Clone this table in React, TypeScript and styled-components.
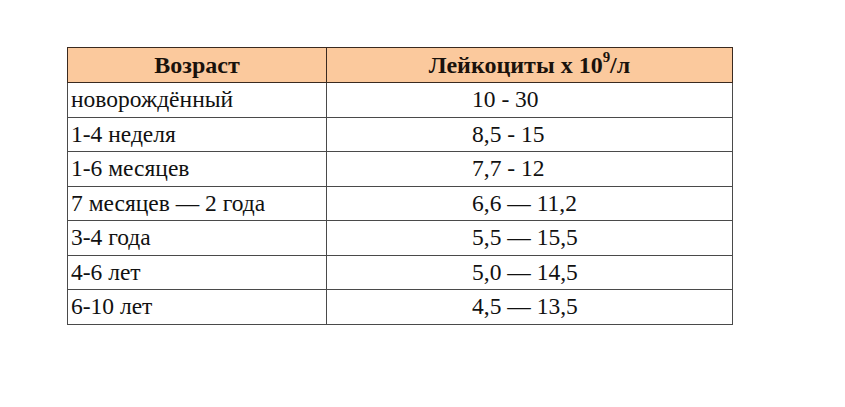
import React from "react";
import styled, { createGlobalStyle } from "styled-components";

const Global = createGlobalStyle`
  html, body { margin: 0; padding: 0; background: #ffffff; }
  body { font-family: "Liberation Serif", serif; }
`;

const serif = `"Liberation Serif", "Times New Roman", serif`;

const Page = styled.div`
  width: 845px;
  height: 407px;
  box-sizing: border-box;
  padding: 47px 0 0 67px;
  background: #ffffff;
  font-family: ${serif};
`;

const Table = styled.table`
  border-collapse: collapse;
  width: 666px;
  table-layout: fixed;
  font-family: ${serif};
  font-size: 23.5px;
  color: #111;
`;

const HeadCell = styled.th`
  font-family: ${serif};
  font-size: 24px;
  background: #fbc99d;
  border: 1.5px solid #3a2a20;
  height: 35px;
  padding: 0;
  font-weight: bold;
  text-align: center;
  vertical-align: middle;
  box-sizing: border-box;
  color: #1a120c;
`;

const Sup = styled.sup`
  font-size: 0.62em;
  line-height: 0;
  vertical-align: 0.75em;
`;

const Cell = styled.td<{ $value?: boolean }>`
  font-family: ${serif};
  font-size: 23.5px;
  border: 1.5px solid #4a4a4a;
  height: 34.5px;
  box-sizing: border-box;
  padding: 0 0 0 ${(p) => (p.$value ? "145px" : "3px")};
  text-align: left;
  vertical-align: middle;
  white-space: nowrap;
`;

const rows: [string, string][] = [
  ["новорождённый", "10 - 30"],
  ["1-4 неделя", "8,5 - 15"],
  ["1-6 месяцев", "7,7 - 12"],
  ["7 месяцев — 2 года", "6,6 — 11,2"],
  ["3-4 года", "5,5 — 15,5"],
  ["4-6 лет", "5,0 — 14,5"],
  ["6-10 лет", "4,5 — 13,5"],
];

export default function App() {
  return (
    <>
      <Global />
      <Page>
        <Table>
          <colgroup>
            <col style={{ width: 259 }} />
            <col />
          </colgroup>
          <thead>
            <tr>
              <HeadCell>Возраст</HeadCell>
              <HeadCell>
                Лейкоциты х 10<Sup>9</Sup>/л
              </HeadCell>
            </tr>
          </thead>
          <tbody>
            {rows.map(([a, b]) => (
              <tr key={a}>
                <Cell>{a}</Cell>
                <Cell $value>{b}</Cell>
              </tr>
            ))}
          </tbody>
        </Table>
      </Page>
    </>
  );
}
